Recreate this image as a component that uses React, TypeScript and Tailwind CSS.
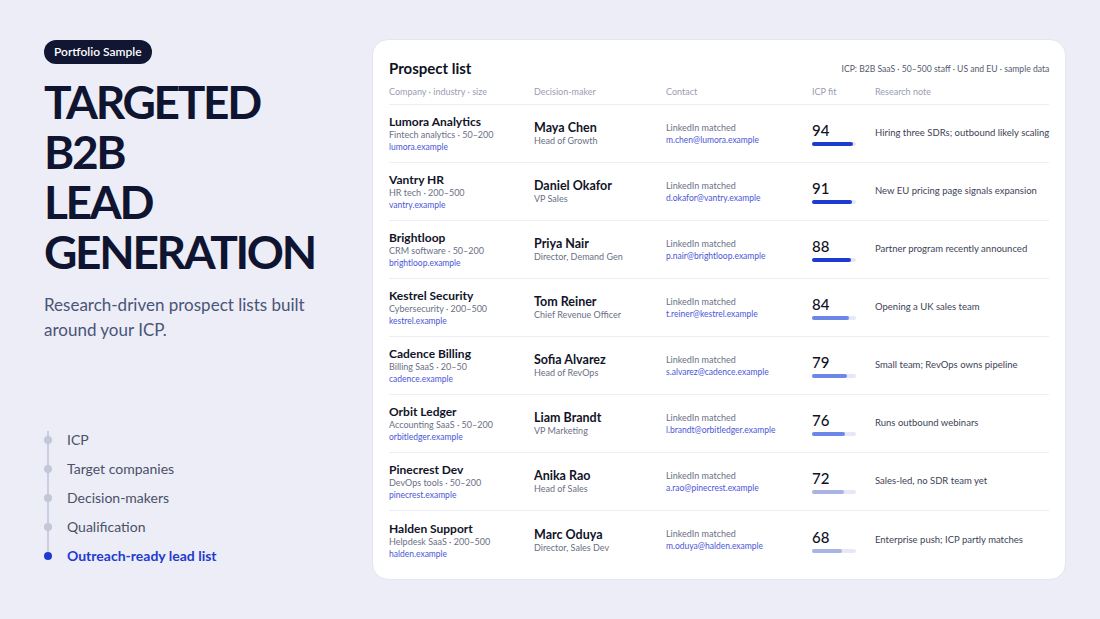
const rows = [
  { company: 'Lumora Analytics', meta: 'Fintech analytics · 50–200', domain: 'lumora.example', name: 'Maya Chen', title: 'Head of Growth', email: 'm.chen@lumora.example', fit: 94, note: 'Hiring three SDRs; outbound likely scaling' },
  { company: 'Vantry HR', meta: 'HR tech · 200–500', domain: 'vantry.example', name: 'Daniel Okafor', title: 'VP Sales', email: 'd.okafor@vantry.example', fit: 91, note: 'New EU pricing page signals expansion' },
  { company: 'Brightloop', meta: 'CRM software · 50–200', domain: 'brightloop.example', name: 'Priya Nair', title: 'Director, Demand Gen', email: 'p.nair@brightloop.example', fit: 88, note: 'Partner program recently announced' },
  { company: 'Kestrel Security', meta: 'Cybersecurity · 200–500', domain: 'kestrel.example', name: 'Tom Reiner', title: 'Chief Revenue Officer', email: 't.reiner@kestrel.example', fit: 84, note: 'Opening a UK sales team' },
  { company: 'Cadence Billing', meta: 'Billing SaaS · 20–50', domain: 'cadence.example', name: 'Sofia Alvarez', title: 'Head of RevOps', email: 's.alvarez@cadence.example', fit: 79, note: 'Small team; RevOps owns pipeline' },
  { company: 'Orbit Ledger', meta: 'Accounting SaaS · 50–200', domain: 'orbitledger.example', name: 'Liam Brandt', title: 'VP Marketing', email: 'l.brandt@orbitledger.example', fit: 76, note: 'Runs outbound webinars' },
  { company: 'Pinecrest Dev', meta: 'DevOps tools · 50–200', domain: 'pinecrest.example', name: 'Anika Rao', title: 'Head of Sales', email: 'a.rao@pinecrest.example', fit: 72, note: 'Sales-led, no SDR team yet' },
  { company: 'Halden Support', meta: 'Helpdesk SaaS · 200–500', domain: 'halden.example', name: 'Marc Oduya', title: 'Director, Sales Dev', email: 'm.oduya@halden.example', fit: 68, note: 'Enterprise push; ICP partly matches' },
];

const steps = ['ICP', 'Target companies', 'Decision-makers', 'Qualification', 'Outreach-ready lead list'];

const barColor = (fit: number) => (fit >= 85 ? 'bg-[#1d3ccf]' : fit >= 75 ? 'bg-[#6b87e8]' : 'bg-[#aab4e4]');

export default function App() {
  return (
    <div
      className="flex h-[619px] w-[1100px] overflow-hidden bg-[#ecedf6] pl-[44px] pr-[34px] py-[39px]"
      style={{ fontFamily: 'Lato, "Noto Sans", sans-serif' }}
    >
      {/* Left intro */}
      <div className="flex w-[328px] shrink-0 flex-col pt-[1px]">
        <div className="self-start rounded-full bg-[#111633] px-[10px] h-[24px] flex items-center text-[12px] font-semibold text-white">
          Portfolio Sample
        </div>
        <h1 className="mt-[13px] text-[46px] font-bold leading-[50px] tracking-[-0.05em] text-[#0f1430]">
          TARGETED
          <br />
          B2B
          <br />
          LEAD
          <br />
          GENERATION
        </h1>
        <p className="mt-[15px] text-[17px] leading-[25px] text-[#4a5478]">
          Research-driven prospect lists built
          <br />
          around your ICP.
        </p>

        <div className="relative mt-auto mb-[10px]">
          <div className="absolute left-[3px] top-[6px] bottom-[14px] w-[2px] bg-[#c9cde0]" />
          {steps.map((s, i) => {
            const active = i === steps.length - 1;
            return (
              <div key={s} className="relative flex h-[29px] items-center">
                <span
                  className={`h-[8px] w-[8px] rounded-full ${active ? 'bg-[#1f3bcf]' : 'bg-[#c3c7da]'}`}
                />
                <span
                  className={`ml-[15px] text-[14px] ${active ? 'font-bold text-[#1f3bcf]' : 'text-[#4b5068]'}`}
                >
                  {s}
                </span>
              </div>
            );
          })}
        </div>
      </div>

      {/* Card */}
      <div className="flex-1 rounded-[16px] border border-[#e3e5f0] bg-white px-[16px] pt-[18px]">
        <div className="flex items-end justify-between">
          <h2 className="text-[15px] font-bold leading-[20px] text-[#0f1222]">Prospect list</h2>
          <span className="pb-[2px] text-[8.6px] text-[#555a70]">
            ICP: B2B SaaS · 50–500 staff · US and EU · sample data
          </span>
        </div>

        <div className="mt-[7px] flex border-b border-[#eceef6] pb-[5px] text-[9px] leading-[14px] text-[#9a9db3]">
          <div className="w-[145px]">Company · industry · size</div>
          <div className="w-[132px]">Decision-maker</div>
          <div className="w-[146px]">Contact</div>
          <div className="w-[63px]">ICP fit</div>
          <div className="flex-1">Research note</div>
        </div>

        {rows.map((r, i) => (
          <div
            key={r.company}
            className={`flex h-[58px] items-center ${i < rows.length - 1 ? 'border-b border-[#eceef6]' : ''}`}
          >
            <div className="flex w-[145px] flex-col pt-[1px]">
              <span className="text-[12px] font-bold leading-[14px] text-[#111428]">{r.company}</span>
              <span className="text-[9px] leading-[12px] text-[#6b7085]">{r.meta}</span>
              <span className="text-[8.5px] leading-[12px] text-[#4b56d6]">{r.domain}</span>
            </div>
            <div className="flex w-[132px] flex-col">
              <span className="text-[12.5px] font-bold leading-[15px] text-[#111428]">{r.name}</span>
              <span className="text-[9px] leading-[12px] text-[#6b7085]">{r.title}</span>
            </div>
            <div className="flex w-[146px] flex-col">
              <span className="text-[9px] leading-[12px] text-[#6b7085]">LinkedIn matched</span>
              <span className="text-[8.5px] leading-[12px] text-[#4b56d6]">{r.email}</span>
            </div>
            <div className="flex w-[63px] flex-col pt-[1px]">
              <span className="text-[15px] font-medium leading-[17px] text-[#0f1222]">{r.fit}</span>
              <div className="mt-[3px] h-[4px] w-[44px] rounded-full bg-[#e6e9f5]">
                <div className={`h-[4px] rounded-full ${barColor(r.fit)}`} style={{ width: `${r.fit}%` }} />
              </div>
            </div>
            <div className="flex-1 whitespace-nowrap text-[9.5px] text-[#3d4256]">{r.note}</div>
          </div>
        ))}
      </div>
    </div>
  );
}
